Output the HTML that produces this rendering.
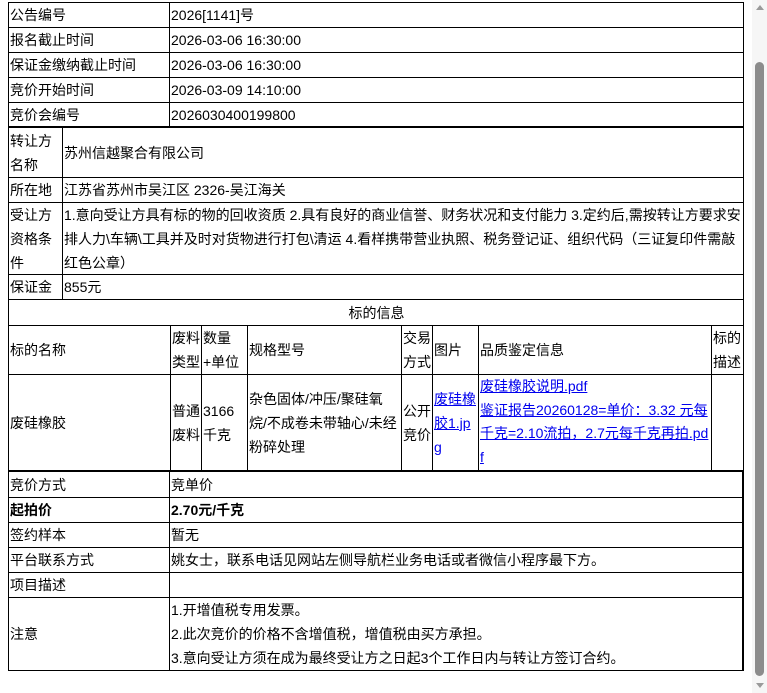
<!DOCTYPE html>
<html><head><meta charset="utf-8">
<style>
html,body{margin:0;padding:0;background:#fff;width:767px;height:693px;overflow:hidden;}
body{font-family:"Liberation Sans","Noto Sans CJK SC",sans-serif;font-size:14px;color:#000;position:relative;}
.c{position:absolute;box-sizing:border-box;border:1px solid #000;display:flex;align-items:center;padding-left:1px;line-height:24px;white-space:nowrap;}
.c>div{display:block;}
.ctr{justify-content:center;}
.l{position:absolute;background:#000;}
a{color:#00e;text-decoration:underline;}
b{font-weight:bold;}
.sb{position:absolute;left:752px;top:0;width:15px;height:693px;background:#f6f6f6;}
.th{position:absolute;left:755px;top:62px;width:9px;height:614px;background:#8c8c8c;border-radius:5px;}
.au{position:absolute;left:756px;top:5px;width:0;height:0;border-left:4px solid transparent;border-right:4px solid transparent;border-bottom:5px solid #9a9a9a;}
.ad{position:absolute;left:756px;top:683px;width:0;height:0;border-left:4px solid transparent;border-right:4px solid transparent;border-top:5px solid #9a9a9a;}
</style></head><body>

<div class="c" style="left:8px;top:2px;width:162px;height:26px"><div>公告编号</div></div>
<div class="c" style="left:169px;top:2px;width:575px;height:26px"><div>2026[1141]号</div></div>
<div class="c" style="left:8px;top:27px;width:162px;height:26px"><div>报名截止时间</div></div>
<div class="c" style="left:169px;top:27px;width:575px;height:26px"><div>2026-03-06 16:30:00</div></div>
<div class="c" style="left:8px;top:52px;width:162px;height:26px"><div>保证金缴纳截止时间</div></div>
<div class="c" style="left:169px;top:52px;width:575px;height:26px"><div>2026-03-06 16:30:00</div></div>
<div class="c" style="left:8px;top:77px;width:162px;height:26px"><div>竞价开始时间</div></div>
<div class="c" style="left:169px;top:77px;width:575px;height:26px"><div>2026-03-09 14:10:00</div></div>
<div class="c" style="left:8px;top:102px;width:162px;height:26px"><div>竞价会编号</div></div>
<div class="c" style="left:169px;top:102px;width:575px;height:26px"><div>2026030400199800</div></div>

<div class="c" style="left:8px;top:127px;width:55px;height:51px"><div>转让方<br>名称</div></div>
<div class="c" style="left:62px;top:127px;width:682px;height:51px"><div>苏州信越聚合有限公司</div></div>
<div class="c" style="left:8px;top:177px;width:55px;height:26px"><div>所在地</div></div>
<div class="c" style="left:62px;top:177px;width:682px;height:26px"><div>江苏省苏州市吴江区 2326-吴江海关</div></div>
<div class="c" style="left:8px;top:202px;width:55px;height:73px;align-items:flex-start"><div>受让方<br>资格条<br>件</div></div>
<div class="c" style="left:62px;top:202px;width:682px;height:73px;align-items:flex-start"><div>1.意向受让方具有标的物的回收资质 2.具有良好的商业信誉、财务状况和支付能力 3.定约后,需按转让方要求安<br>排人力\车辆\工具并及时对货物进行打包\清运 4.看样携带营业执照、税务登记证、组织代码（三证复印件需敲<br>红色公章）</div></div>
<div class="c" style="left:8px;top:274px;width:55px;height:26px"><div>保证金</div></div>
<div class="c" style="left:62px;top:274px;width:682px;height:26px"><div>855元</div></div>
<div class="l" style="left:8px;top:126px;width:736px;height:2px"></div>

<div class="c ctr" style="left:8px;top:299px;width:736px;height:27px"><div>标的信息</div></div>
<div class="c" style="left:8px;top:325px;width:163px;height:50px"><div>标的名称</div></div>
<div class="c" style="left:170px;top:325px;width:32px;height:50px"><div>废料<br>类型</div></div>
<div class="c" style="left:201px;top:325px;width:47px;height:50px"><div>数量<br>+单位</div></div>
<div class="c" style="left:247px;top:325px;width:155px;height:50px"><div>规格型号</div></div>
<div class="c" style="left:401px;top:325px;width:32px;height:50px"><div>交易<br>方式</div></div>
<div class="c" style="left:432px;top:325px;width:47px;height:50px"><div>图片</div></div>
<div class="c" style="left:478px;top:325px;width:234px;height:50px"><div>品质鉴定信息</div></div>
<div class="c" style="left:711px;top:325px;width:33px;height:50px"><div>标的<br>描述</div></div>

<div class="c" style="left:8px;top:374px;width:163px;height:97px"><div>废硅橡胶</div></div>
<div class="c" style="left:170px;top:374px;width:32px;height:97px"><div>普通<br>废料</div></div>
<div class="c" style="left:201px;top:374px;width:47px;height:97px"><div>3166<br>千克</div></div>
<div class="c" style="left:247px;top:374px;width:155px;height:97px;overflow:hidden"><div>杂色固体/冲压/聚硅氧<br>烷/不成卷未带轴心/未经<br>粉碎处理</div></div>
<div class="c" style="left:401px;top:374px;width:32px;height:97px"><div>公开<br>竞价</div></div>
<div class="c" style="left:432px;top:374px;width:47px;height:97px"><div><a>废硅橡<br>胶1.jp<br>g</a></div></div>
<div class="c" style="left:478px;top:374px;width:234px;height:97px;align-items:flex-start;overflow:hidden"><div style="line-height:23.5px"><a>废硅橡胶说明.pdf</a><br><a>鉴证报告20260128=单价：3.32 元每<br>千克=2.10流拍，2.7元每千克再拍.pd<br>f</a></div></div>
<div class="c" style="left:711px;top:374px;width:33px;height:97px"></div>

<div class="c" style="left:8px;top:471px;width:162px;height:27px"><div>竞价方式</div></div>
<div class="c" style="left:169px;top:471px;width:575px;height:27px"><div>竞单价</div></div>
<div class="c" style="left:8px;top:497px;width:162px;height:26px"><div><b>起拍价</b></div></div>
<div class="c" style="left:169px;top:497px;width:575px;height:26px"><div><b>2.70元/千克</b></div></div>
<div class="c" style="left:8px;top:522px;width:162px;height:26px"><div>签约样本</div></div>
<div class="c" style="left:169px;top:522px;width:575px;height:26px"><div>暂无</div></div>
<div class="c" style="left:8px;top:547px;width:162px;height:26px"><div>平台联系方式</div></div>
<div class="c" style="left:169px;top:547px;width:575px;height:26px"><div>姚女士，联系电话见网站左侧导航栏业务电话或者微信小程序最下方。</div></div>
<div class="c" style="left:8px;top:572px;width:162px;height:26px"><div>项目描述</div></div>
<div class="c" style="left:169px;top:572px;width:575px;height:26px"></div>
<div class="c" style="left:8px;top:597px;width:162px;height:74px"><div>注意</div></div>
<div class="c" style="left:169px;top:597px;width:575px;height:74px"><div>1.开增值税专用发票。<br>2.此次竞价的价格不含增值税，增值税由买方承担。<br>3.意向受让方须在成为最终受让方之日起3个工作日内与转让方签订合约。</div></div>
<div class="l" style="left:8px;top:470px;width:736px;height:2px"></div>
<div class="l" style="left:742px;top:470px;width:2px;height:201px"></div>

<div class="sb"></div><div class="th"></div><div class="au"></div><div class="ad"></div>
</body></html>
